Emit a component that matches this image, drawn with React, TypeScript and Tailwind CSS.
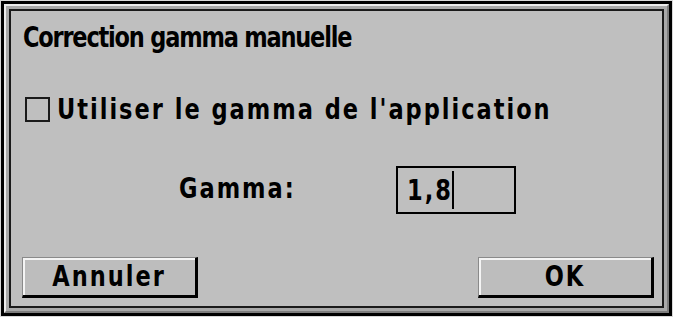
import React from "react";

const font = { fontFamily: '"DejaVu Sans Condensed", "DejaVu Sans", sans-serif' };

// Charcoal-ish: tall caps, a bit of tracking
const txt = "inline-block text-[25px] font-bold leading-none text-black scale-y-[1.1]";

function MacButton({ label }: { label: string }) {
    return (
        <div className="w-[176px] h-[41px] border-t border-l border-[#8a8a8a] border-r-[3px] border-b-[3px] border-r-black border-b-black bg-[#bdbdbd] shadow-[inset_2px_2px_0_#f4f4f4] flex items-center justify-center">
            <span className={`${txt} tracking-[2px]`}>{label}</span>
        </div>
    );
}

export default function App() {
    return (
        <div className="w-[673px] h-[317px] bg-[#d8d8d8] p-px" style={font}>
            <div className="w-full h-full border-[3px] border-black">
                <div className="w-full h-full border-2 border-t-[#ececec] border-l-[#ececec] border-r-[#7d7d7d] border-b-[#7d7d7d] bg-[#a9a9a9] p-[3px]">
                    <div className="w-full h-full border-2 border-[#1a1a1a] bg-[#bfbfbf] flex flex-col">
                        <div className="pl-[12px] pt-[14px]">
                            <span className={`${txt} tracking-[-1.2px]`}>Correction gamma manuelle</span>
                        </div>

                        <div className="flex items-center mt-[44px] pl-[14px]">
                            <div className="w-[25px] h-[25px] border-2 border-[#1a1a1a] bg-[#bfbfbf]" />
                            <span className={`${txt} ml-[7px] tracking-[2px]`}>
                                Utiliser le gamma de l'application
                            </span>
                        </div>

                        <div className="flex items-center mt-[44px] pl-[168px]">
                            <span className="w-[217px]">
                                <span className={`${txt} tracking-[2px]`}>Gamma:</span>
                            </span>
                            <div className="w-[120px] h-[48px] border-2 border-black bg-[#bfbfbf] flex items-center pl-[9px]">
                                <span className={`${txt} tracking-[2px]`}>1,8</span>
                                <span className="w-[2px] h-[38px] bg-black -ml-[1px]" />
                            </div>
                        </div>

                        <div className="flex justify-between mt-auto mb-[8px] pl-[11px] pr-[8px]">
                            <MacButton label="Annuler" />
                            <MacButton label="OK" />
                        </div>
                    </div>
                </div>
            </div>
        </div>
    );
}
